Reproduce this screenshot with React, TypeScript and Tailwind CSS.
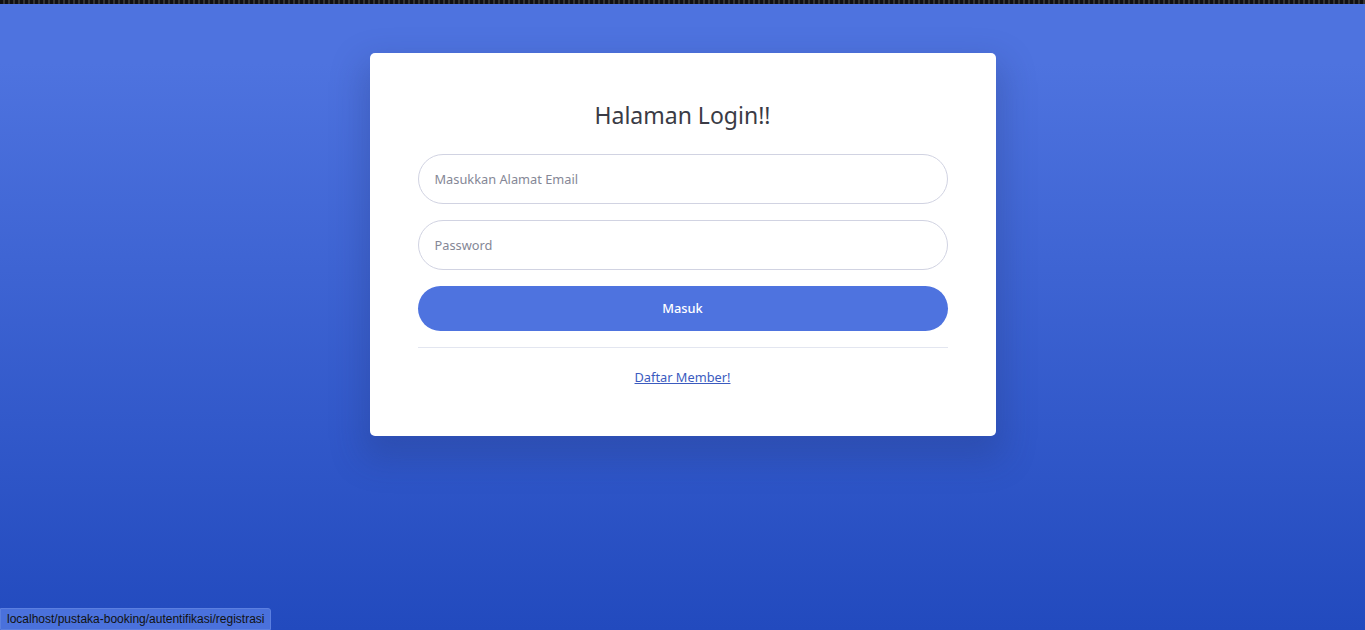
export default function App() {
  return (
    <div
      className="relative flex h-[630px] w-full flex-col overflow-hidden bg-[linear-gradient(180deg,#4e73df_10%,#224abe_100%)]"
      style={{ fontFamily: '"Noto Sans", "Open Sans", sans-serif' }}
    >
      {/* browser chrome strip on top */}
      <div className="h-[4px] w-full bg-[repeating-linear-gradient(90deg,#111_0px,#111_3px,#333_3px,#333_5px)]" />

      <div className="flex justify-center pt-[49px]">
        <div className="w-[626px] rounded-[5px] bg-white px-12 pb-12 pt-12 shadow-[0_16px_32px_8px_rgba(34,50,110,0.25)]">
          <h1 className="mb-6 text-center text-[23px] leading-[29px] text-[#3a3b45]">Halaman Login!!</h1>

          <form className="flex flex-col" onSubmit={(e) => e.preventDefault()}>
            <input
              type="text"
              placeholder="Masukkan Alamat Email"
              className="mb-4 h-[50px] w-full rounded-full border border-[#d1d3e2] px-4 text-[12.8px] text-[#6e707e] outline-none placeholder:text-[#858796]"
            />
            <input
              type="password"
              placeholder="Password"
              className="mb-4 h-[50px] w-full rounded-full border border-[#d1d3e2] px-4 text-[12.8px] text-[#6e707e] outline-none placeholder:text-[#858796]"
            />
            <button
              type="submit"
              className="h-[45px] w-full rounded-full bg-[#4e73df] text-[12.8px] font-medium text-white"
            >
              Masuk
            </button>
          </form>

          <hr className="my-4 border-t border-[#e3e6f0]" />

          <div className="text-center">
            <a href="#" className="text-[12.8px] leading-[19px] text-[#3b5bbf] underline">
              Daftar Member!
            </a>
          </div>
        </div>
      </div>

      {/* status bar link preview */}
      <div
        className="absolute bottom-0 left-0 rounded-tr-[3px] border border-[#5b7fe0] bg-[#4a71dc] px-[6px] py-[2px] text-[12px] leading-[16px] text-[#111]"
        style={{ fontFamily: '"Liberation Sans", Arial, sans-serif' }}
      >
        localhost/pustaka-booking/autentifikasi/registrasi
      </div>
    </div>
  );
}
